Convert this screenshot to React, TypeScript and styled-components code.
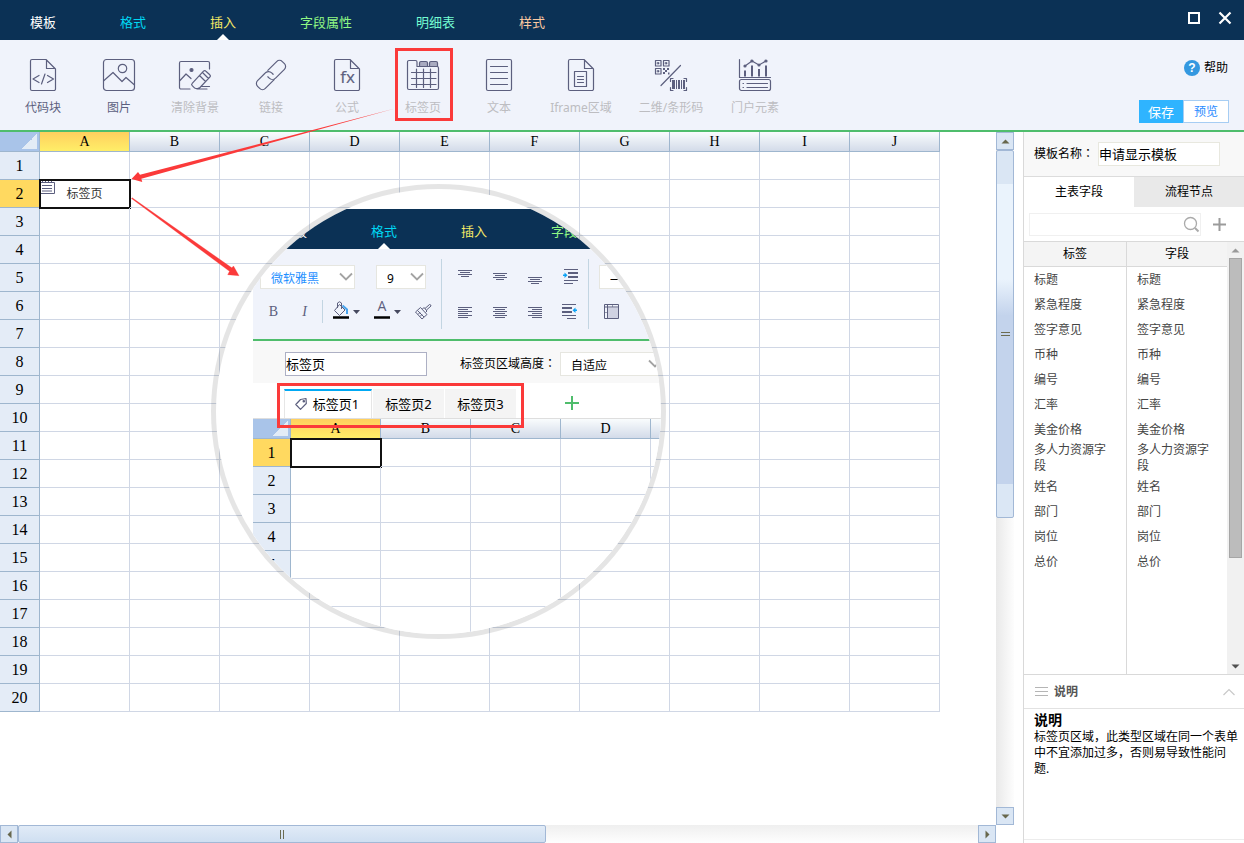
import React from "react";
import styled, { createGlobalStyle, css } from "styled-components";

const INK = "#5c5f7e";
const RED = "#fb3a3a";
const GREEN = "#4fbd6c";
const CJK = `"Noto Sans", "Noto Sans CJK SC", sans-serif`;

const GlobalStyle = createGlobalStyle`
  *, *::before, *::after { box-sizing: border-box; }
  body { margin: 0; background: #fff; font: 12px/16px ${CJK}; color: #000; overflow: hidden; }
  button, input, select { font: inherit; color: inherit; margin: 0; padding: 0; border: 0; border-radius: 0; background: none; outline: none; }
  svg { display: block; flex: none; overflow: visible; }
  h2, h3, p { margin: 0; }
`;

/* Full-width colon set in the middle of its square */
const Mark = styled.span`
  font-family: "Noto Sans CJK TC", sans-serif;
  line-height: 1;
`;

/* ---------- page frame ---------- */

const Page = styled.div`
  position: relative;
  display: flex;
  flex-direction: column;
  height: 100vh;
  overflow: hidden;
`;

const TitleBar = styled.header<{ $inset: number }>`
  display: flex;
  justify-content: space-between;
  height: 40px;
  padding-left: ${(p) => p.$inset}px;
  background: #0b3155;
`;

const Menu = styled.nav`
  display: flex;
  gap: 64px;
`;

const MenuLink = styled.a<{ $color: string; $active: boolean }>`
  position: relative;
  flex: none;
  padding-top: 4px;
  font-size: 13px;
  line-height: 36px;
  color: ${(p) => p.$color};
  text-decoration: none;
  white-space: nowrap;
  ${(p) =>
    p.$active &&
    css`
      &::after {
        content: "";
        position: absolute;
        left: 50%;
        bottom: 0;
        margin-left: -6px;
        border: 6px solid transparent;
        border-top: 0;
        border-bottom-color: #fff;
      }
    `}
`;

const WindowButtons = styled.div`
  display: flex;
  gap: 15px;
  padding: 10px 11px;
`;

const WindowButton = styled.button`
  width: 16px;
  height: 16px;
`;

const menuItems = [
  { label: "模板", color: "#ffffff" },
  { label: "格式", color: "#00d8f4" },
  { label: "插入", color: "#f6ea66" },
  { label: "字段属性", color: "#90f784" },
  { label: "明细表", color: "#74fbd2" },
  { label: "样式", color: "#fbc9a2" },
];

function MenuBar({ items, active }: { items: typeof menuItems; active: string }) {
  return (
    <Menu>
      {items.map((m) => (
        <MenuLink key={m.label} href="#" $color={m.color} $active={m.label === active}>
          {m.label}
        </MenuLink>
      ))}
    </Menu>
  );
}

/* ---------- ribbon ---------- */

const Ribbon = styled.section`
  display: flex;
  justify-content: space-between;
  height: 92px;
  flex: none;
  border-bottom: 2px solid ${GREEN};
  background: #f0f3fb;
`;

const Tools = styled.div`
  display: flex;
  padding: 8px 0 9px 5px;
`;

const Tool = styled.button<{ $width: number; $muted: boolean }>`
  position: relative;
  display: flex;
  flex-direction: column;
  align-items: center;
  gap: 8px;
  width: ${(p) => p.$width}px;
  padding-top: 10px;
  line-height: 16px;
  white-space: nowrap;
  color: ${(p) => (p.$muted ? "#bdbdc1" : INK)};
`;

const ToolFrame = styled.span`
  position: absolute;
  inset: 0 9px 0 10px;
  width: 58px;
  border: 3px solid ${RED};
`;

const PAGE_PATH =
  "M6 1.5H20L29.5 11V31a1.5 1.5 0 0 1-1.5 1.5H6A1.5 1.5 0 0 1 4.5 31V3A1.5 1.5 0 0 1 6 1.5ZM20.5 2V10.5H29";

function Glyph({ children }: { children: React.ReactNode }) {
  return (
    <svg width="34" height="34" viewBox="0 0 34 34" fill="none" stroke={INK} strokeWidth="1.2" strokeLinecap="round" strokeLinejoin="round">
      {children}
    </svg>
  );
}

const tools: { label: string; width: number; muted: boolean; framed?: boolean; art: React.ReactNode }[] = [
  {
    label: "代码块",
    width: 76,
    muted: false,
    art: (
      <>
        <path d={PAGE_PATH} />
        <path d="M13 17.5 7 21l6 3.5M19 16l-3.5 10M21.5 17.5l6 3.5-6 3.5" />
      </>
    ),
  },
  {
    label: "图片",
    width: 76,
    muted: false,
    art: (
      <>
        <rect x="1.5" y="1.5" width="31" height="31" rx="3" />
        <circle cx="20.5" cy="10.5" r="4.2" />
        <path d="M2 22.5 11 14.5l9 9 4-4 8.5 7.5" />
      </>
    ),
  },
  {
    label: "清除背景",
    width: 76,
    muted: true,
    art: (
      <>
        <path d="M31.5 11V5a1.5 1.5 0 0 0-1.5-1.5H3A1.5 1.5 0 0 0 1.5 5v24.5a1.5 1.5 0 0 0 1.5 1.5h9M2 22.5 8 16l5 4.5" />
        <circle cx="13.5" cy="12" r="1.5" fill={INK} />
        <path d="M25.5 13.2q1.2-1.2 2.4 0l3.9 3.6q1.2 1.2 0 2.4L22 29.5q-1 1-2.5 1h-1.5q-1 0-1.8-.8l-2-2q-1.2-1.2 0-2.4ZM21.5 17.5l6 6M24.5 14.5l6 6M24 28.5h7.5M19 31h10" />
      </>
    ),
  },
  {
    label: "链接",
    width: 76,
    muted: true,
    art: (
      <g transform="translate(17 17) rotate(-45)">
        <path d="M1-5.5H13.5a4 4 0 0 1 4 4V1.5a4 4 0 0 1-4 4H1a4.5 4.5 0 0 1-4.5-4.5V-1" />
        <path d="M-1 5.5H-13.5a4 4 0 0 1-4-4V-1.5a4 4 0 0 1 4-4H-3a4.5 4.5 0 0 1 5 4.5V1" />
      </g>
    ),
  },
  {
    label: "公式",
    width: 76,
    muted: true,
    art: (
      <>
        <path d={PAGE_PATH} />
        <text x="17.5" y="25" textAnchor="middle" fontSize="17" fontFamily="Open Sans, sans-serif" fill={INK} strokeWidth="0.2">
          fx
        </text>
      </>
    ),
  },
  {
    label: "标签页",
    width: 76,
    muted: true,
    framed: true,
    art: (
      <>
        <path d="M3 2.5H9.5A1.5 1.5 0 0 1 11 4V8.5H31a1.5 1.5 0 0 1 1.5 1.5V30a1.5 1.5 0 0 1-1.5 1.5H3A1.5 1.5 0 0 1 1.5 30V4A1.5 1.5 0 0 1 3 2.5Z" />
        <path d="M13.5 8.5V5A1.5 1.5 0 0 1 15 3.5h5A1.5 1.5 0 0 1 21.5 5v3.5ZM23.5 8.5V5A1.5 1.5 0 0 1 25 3.5h5A1.5 1.5 0 0 1 31.5 5v3.5Z" fill="#a9abc0" />
        <path d="M5.5 14.5H30M5.5 20.5H30M5.5 26.5H30M10.5 11V29.5M17.5 11V29.5M24.5 11V29.5" />
      </>
    ),
  },
  {
    label: "文本",
    width: 76,
    muted: true,
    art: (
      <>
        <rect x="4.5" y="1.5" width="25" height="31" rx="1.5" />
        <path d="M8.5 8.5h17M8.5 14.5h17M8.5 20.5h17M8.5 26.5h17" />
      </>
    ),
  },
  {
    label: "Iframe区域",
    width: 88,
    muted: true,
    art: (
      <>
        <path d={PAGE_PATH} />
        <path d="M10.5 13.5h12v15h-12ZM13.5 18.5h6M13.5 21.5h6M13.5 24.5h6" />
      </>
    ),
  },
  {
    label: "二维/条形码",
    width: 92,
    muted: true,
    art: (
      <>
        <path d="M1.5 2.5h5.5v5.5h-5.5ZM9.5 2.5h5.5v5.5h-5.5ZM1.5 10.5h5.5v5.5h-5.5ZM26.5 7.5 7 27.5" />
        <path d="M3.5 4.5h1.5v1.5h-1.5ZM11.5 4.5h1.5v1.5h-1.5ZM3.5 12.5h1.5v1.5h-1.5Z" fill={INK} strokeWidth="0.6" />
        <path d="M9 10h2v2h-2ZM13 10h2v2h-2ZM11 12h2v2h-2ZM9 14h2v2h-2ZM14 14.5h1.5v2h-1.5Z" fill={INK} stroke="none" />
        <path d="M19 20.5h-2.5v3M30 20.5h2.5v3M19 32.5h-2.5v-3M30 32.5h2.5v-3" />
        <path d="M18 22h3v9h-3ZM22 22h1v9h-1ZM24 22h2v9h-2ZM27 22h1v9h-1ZM29 22h2v9h-2Z" fill={INK} stroke="none" />
      </>
    ),
  },
  {
    label: "门户元素",
    width: 76,
    muted: true,
    art: (
      <>
        <path d="M1.5 1.5V19.5H32.5M7 8l7-5 7 4 7-4" />
        <path d="M7 12.5V18.5M14 7.5V18.5M21 11V18.5M28 7.5V18.5" strokeWidth="2" strokeLinecap="butt" />
        <circle cx="7" cy="8" r="1" fill={INK} />
        <circle cx="14" cy="3" r="1" fill={INK} />
        <circle cx="21" cy="7" r="1" fill={INK} />
        <circle cx="28" cy="3" r="1" fill={INK} />
        <rect x="1.5" y="21.5" width="31" height="11" rx="2" />
        <path d="M5 25.5h.5M5 29.5h.5M9 25.5h20.5M9 29.5h20.5" />
      </>
    ),
  },
];

const RibbonSide = styled.div`
  display: flex;
  flex-direction: column;
  align-items: flex-end;
  gap: 24px;
  padding: 20px 15px 0 0;
`;

const HelpLink = styled.a`
  display: flex;
  align-items: center;
  gap: 4px;
  margin-right: 1px;
  color: #000;
  text-decoration: none;
`;

const HelpMark = styled.span`
  width: 16px;
  height: 16px;
  border-radius: 8px;
  background: #3498e0;
  color: #fff;
  font: bold 12px/16px "Liberation Sans", sans-serif;
  text-align: center;
`;

const Actions = styled.div`
  display: flex;
`;

const ActionButton = styled.button<{ $primary?: boolean }>`
  height: 23px;
  ${(p) =>
    p.$primary
      ? css`
          width: 44px;
          background: #2fb4ff;
          color: #fff;
          font-size: 13px;
        `
      : css`
          width: 46px;
          border: 1px solid #a6cdf3;
          background: #fff;
          color: #2a8cff;
        `}
`;

/* ---------- spreadsheet ---------- */

const Workspace = styled.main`
  display: flex;
  flex: 1;
  min-height: 0;
`;

const Editor = styled.section`
  position: relative;
  display: flex;
  flex: 1;
  flex-direction: column;
  min-width: 0;
  padding-right: 9px;
`;

const EditorBody = styled.div`
  display: flex;
  flex: 1;
  min-height: 0;
`;

const EditorView = styled.div`
  flex: 1;
  min-width: 0;
  overflow: hidden;
`;

const Sheet = styled.table`
  table-layout: fixed;
  width: 0;
  border-spacing: 0;
  background: #fff;
`;

const RowHeadCol = styled.col<{ $width: number }>`
  width: ${(p) => p.$width}px;
`;

const DataCol = styled.col`
  width: 90px;
`;

const headEdge = css`
  padding: 0;
  border: solid #9eb6ce;
  border-width: 0 1px 1px 0;
  font-family: "Liberation Serif", serif;
  font-weight: normal;
`;

const Corner = styled.td`
  ${headEdge}
  height: 20px;
  background: linear-gradient(135deg, transparent 50%, #e3ecf6 50%) right 2px bottom 2px / 15px 15px no-repeat #a9c4e9;
`;

const ColHead = styled.th<{ $on: boolean }>`
  ${headEdge}
  height: 20px;
  font-size: 14px;
  line-height: 19px;
  background: ${(p) => (p.$on ? "linear-gradient(#ffcf5e, #ffee68)" : "linear-gradient(#f9fcfd, #d3dbe9)")};
`;

const RowHead = styled.th<{ $on: boolean }>`
  ${headEdge}
  height: 28px;
  font-size: 16px;
  line-height: 27px;
  background: ${(p) => (p.$on ? "#ffd960" : "#e4ecf7")};
`;

const Cell = styled.td<{ $on: boolean }>`
  position: relative;
  padding: 0;
  border: solid #d0d7e5;
  border-width: 0 1px 1px 0;
  text-align: center;
  color: #333;
  ${(p) =>
    p.$on &&
    css`
      &::after {
        content: "";
        position: absolute;
        inset: -1px -2px -2px -1px;
        border: 2px solid #111;
      }
    `}
`;

const CellMark = styled.svg`
  position: absolute;
  left: 0;
  top: 0;
`;

function Grid({ rows, cols, headWidth, selectedRow, children }: { rows: number; cols: string; headWidth: number; selectedRow: number; children?: React.ReactNode }) {
  const letters = cols.split("");
  return (
    <Sheet>
      <colgroup>
        <RowHeadCol $width={headWidth} />
        {letters.map((c) => (
          <DataCol key={c} />
        ))}
      </colgroup>
      <thead>
        <tr>
          <Corner />
          {letters.map((c) => (
            <ColHead key={c} scope="col" $on={c === "A"}>
              {c}
            </ColHead>
          ))}
        </tr>
      </thead>
      <tbody>
        {Array.from({ length: rows }, (_, i) => i + 1).map((r) => (
          <tr key={r}>
            <RowHead scope="row" $on={r === selectedRow}>
              {r}
            </RowHead>
            {letters.map((c) => {
              const on = r === selectedRow && c === "A";
              return (
                <Cell key={c} $on={on}>
                  {on ? children : null}
                </Cell>
              );
            })}
          </tr>
        ))}
      </tbody>
    </Sheet>
  );
}

/* ---------- scrollbars ---------- */

const Track = styled.div<{ $vertical?: boolean }>`
  display: flex;
  flex: none;
  ${(p) =>
    p.$vertical
      ? css`
          flex-direction: column;
          width: 18px;
          background: linear-gradient(90deg, #e9e9e9, #fdfdfd);
        `
      : css`
          height: 18px;
          margin-right: 18px;
          background: linear-gradient(#efefef, #fefefe);
        `}
`;

const Lane = styled.div<{ $vertical?: boolean }>`
  display: flex;
  flex: 1;
  flex-direction: ${(p) => (p.$vertical ? "column" : "row")};
`;

const Thumb = styled.div<{ $vertical?: boolean }>`
  display: flex;
  align-items: center;
  justify-content: center;
  flex: none;
  border: 1px solid #a2b8d6;
  border-radius: 2px;
  ${(p) =>
    p.$vertical
      ? css`
          height: 56%;
          background: linear-gradient(#dae6f4 0 9%, #eaf3fc 9% 35%, #c3d3ec 45% 91%, #dbe7f5 91%);
        `
      : css`
          width: 55%;
          background: linear-gradient(#e1ebf7, #cfdff1);
        `}
`;

const Grip = styled.span<{ $vertical?: boolean }>`
  width: ${(p) => (p.$vertical ? 9 : 4)}px;
  height: ${(p) => (p.$vertical ? 4 : 9)}px;
  border: solid #6b6b50;
  border-width: ${(p) => (p.$vertical ? "1px 0" : "0 1px")};
`;

const ArrowButton = styled.button`
  display: flex;
  align-items: center;
  justify-content: center;
  flex: none;
  width: 18px;
  height: 18px;
  border: 1px solid #a2b8d6;
  background: #dae6f4;
`;

const arrowPaths = {
  up: "M.5 6.5 4.5 2.5 8.5 6.5Z",
  down: "M.5 2.5 4.5 6.5 8.5 2.5Z",
  left: "M6.5 .5 2.5 4.5 6.5 8.5Z",
  right: "M2.5 .5 6.5 4.5 2.5 8.5Z",
};

function Arrow({ dir, color = "#67674c" }: { dir: keyof typeof arrowPaths; color?: string }) {
  return (
    <svg width="9" height="9" viewBox="0 0 9 9">
      <path d={arrowPaths[dir]} fill={color} />
    </svg>
  );
}

/* ---------- magnified preview of the tab page ---------- */

const Lens = styled.div`
  position: absolute;
  left: 211px;
  top: 52px;
  width: 455px;
  height: 455px;
  padding: 20px 0 0 37px;
  border: 5px solid rgba(0, 0, 0, 0.1);
  border-radius: 50%;
  background: #fff;
  background-clip: padding-box;
  overflow: hidden;
`;

const LensRibbon = styled.div`
  display: flex;
  height: 92px;
  padding-top: 10px;
  border-bottom: 2px solid ${GREEN};
  background: #f0f3fb;
`;

const LensGroup = styled.div<{ $width: number }>`
  flex: none;
  width: ${(p) => p.$width}px;
  height: 70px;
  border-right: 1px solid #c3d5e2;
`;

const LensRow = styled.div<{ $inset: number; $gap: number }>`
  display: flex;
  align-items: center;
  gap: ${(p) => p.$gap}px;
  height: 35px;
  padding-left: ${(p) => p.$inset}px;
`;

const SelectBox = styled.span<{ $width: number }>`
  position: relative;
  display: flex;
  align-items: center;
  flex: none;
  width: ${(p) => p.$width}px;
  height: 24px;
  border: 1px solid #e6e6e0;
  background: #fff;

  svg {
    position: absolute;
    right: 1px;
    pointer-events: none;
  }
`;

const Select = styled.select<{ $color: string }>`
  width: 100%;
  height: 22px;
  padding: 4px 0 0 10px;
  appearance: none;
  color: ${(p) => p.$color};
`;

function PickList({ id, label, value, width, color = "#000" }: { id: string; label: string; value: string; width: number; color?: string }) {
  return (
    <SelectBox $width={width}>
      <Select id={id} aria-label={label} $color={color} defaultValue={value}>
        <option>{value}</option>
      </Select>
      <svg width="14" height="10" viewBox="0 0 14 10" fill="none" stroke="#a3a3a3" strokeWidth="1.8">
        <path d="M1 1.5 7 7.5 13 1.5" />
      </svg>
    </SelectBox>
  );
}

const LetterButton = styled.button<{ $italic?: boolean }>`
  width: 31px;
  font: ${(p) => (p.$italic ? "italic " : "")}14px/17px "Liberation Serif", serif;
  color: ${INK};
  flex: none;
`;

const RowRule = styled.span`
  flex: none;
  width: 1px;
  height: 23px;
  margin: 0 10px 0 2px;
  background: #c3d5e2;
`;

const IconButton = styled.button<{ $width: number }>`
  display: flex;
  flex: none;
  width: ${(p) => p.$width}px;
`;

function Small({ width = 17, height = 17, children }: { width?: number; height?: number; children: React.ReactNode }) {
  return (
    <svg width={width} height={height} viewBox={`0 0 ${width} ${height}`} fill="none" stroke={INK} strokeWidth="1">
      {children}
    </svg>
  );
}

const lensIcons: { label: string; art: React.ReactNode }[][] = [
  [
    { label: "顶端对齐", art: <path d="M0 2.5h14M2 4.5h10M0 6.5h14M3 8.5h8" /> },
    { label: "垂直居中", art: <path d="M0 5.5h14M2 7.5h10M0 9.5h14M3 11.5h8" /> },
    { label: "底端对齐", art: <path d="M0 9.5h14M2 11.5h10M0 13.5h14M3 15.5h8" /> },
    {
      label: "增加缩进",
      art: (
        <>
          <path d="M1 1.5h14M1 12.5h14M1 15.5h9" />
          <path d="M5 5h10M5 9h10" strokeWidth="2" />
          <path d="M0 6.5v1.5h1.5v2l3-2.7-3-2.7v2Z" fill="#0aa2f5" stroke="none" />
        </>
      ),
    },
  ],
  [
    { label: "左对齐", art: <path d="M0 4.5h14M0 6.5h10M0 8.5h14M0 10.5h10M0 12.5h14M0 14.5h10" /> },
    { label: "居中", art: <path d="M0 4.5h14M2 6.5h10M0 8.5h14M2 10.5h10M0 12.5h14M2 14.5h10" /> },
    { label: "右对齐", art: <path d="M0 4.5h14M4 6.5h10M0 8.5h14M4 10.5h10M0 12.5h14M4 14.5h10" /> },
    {
      label: "减少缩进",
      art: (
        <>
          <path d="M-1 1.5h14M-1 12.5h14M4 15.5h9" />
          <path d="M-1 5h10M-1 9h10" strokeWidth="2" />
          <path d="M14 6.5v1.5h-1.5v2l-3-2.7 3-2.7v2Z" fill="#0aa2f5" stroke="none" />
        </>
      ),
    },
  ],
];

const SettingsBar = styled.div`
  display: flex;
  align-items: center;
  height: 42px;
  padding: 4px 0 0 32px;
  background: #f8f8f8;
`;

const TextField = styled.input<{ $edge: string }>`
  flex: none;
  height: 24px;
  padding-bottom: 2px;
  border: 1px solid ${(p) => p.$edge};
  background: #fff;
  font-size: 13px;
`;

const TabNameField = styled(TextField)`
  width: 142px;
  margin-right: 33px;
`;

const HeightLabel = styled.label`
  flex: none;
  width: 100px;
  white-space: nowrap;
`;

const TabStrip = styled.div`
  position: relative;
  display: flex;
  align-items: flex-end;
  gap: 1px;
  height: 36px;
  padding-left: 31px;
  border-bottom: 1px solid #dedede;
`;

const TabButton = styled.button<{ $on?: boolean }>`
  display: flex;
  align-items: center;
  justify-content: center;
  gap: 6px;
  flex: none;
  width: ${(p) => (p.$on ? 88 : 71)}px;
  height: 29px;
  font-size: 13px;
  background: ${(p) => (p.$on ? "#fff" : "#f4f4f4")};
  ${(p) =>
    p.$on &&
    css`
      padding: 0 2px 2px 0;
      border: solid #e6e6e6;
      border-width: 2px 1px 0;
      border-top-color: #00a9f4;
    `}
`;

const AddTab = styled.button`
  margin: 0 0 8px 48px;
`;

const TabFrame = styled.span`
  position: absolute;
  left: 24px;
  top: 0;
  z-index: 1;
  width: 247px;
  height: 45px;
  border: 3px solid ${RED};
`;

function Magnifier() {
  return (
    <Lens>
      <TitleBar as="div" $inset={28}>
        <MenuBar items={menuItems.slice(0, 4)} active="格式" />
      </TitleBar>
      <LensRibbon>
        <LensGroup $width={189}>
          <LensRow $inset={7} $gap={21}>
            <PickList id="font-family" label="字体" value="微软雅黑" width={95} color="#1e8fff" />
            <PickList id="font-size" label="字号" value="9" width={50} />
          </LensRow>
          <LensRow $inset={5} $gap={0}>
            <LetterButton aria-label="加粗">B</LetterButton>
            <LetterButton aria-label="斜体" $italic>
              I
            </LetterButton>
            <RowRule />
            <IconButton $width={41} aria-label="背景色">
              <Small width={28} height={21}>
                <path d="M6.5 3.5 12 9 6.5 14.5 1.5 9.5ZM4.5 7V2q2-2.5 4 0V8" />
                <path d="M9.5 4.5 14 8.5V13" stroke="#4aa5ee" strokeWidth="2" />
                <path d="M0 16.5h16" stroke="#000" strokeWidth="2.5" />
                <path d="M20 9h7l-3.5 4Z" fill="#46495f" stroke="none" />
              </Small>
            </IconButton>
            <IconButton $width={41} aria-label="字体颜色">
              <Small width={28} height={21}>
                <text x="8" y="10" textAnchor="middle" fontSize="14" fontFamily="Open Sans, sans-serif" fill={INK} stroke="none">
                  A
                </text>
                <path d="M0 16.5h16" stroke="#000" strokeWidth="2.5" />
                <path d="M20 9h7l-3.5 4Z" fill="#46495f" stroke="none" />
              </Small>
            </IconButton>
            <IconButton $width={17} aria-label="格式刷">
              <Small>
                <path d="M.5 9 7 16 12 11.5 5.5 4.5ZM2.5 7.5l6.5 6.5M3 11.5l2-2M5 13.5l2-2M7.5 6 9 4.5 12 8l-1.5 1.5" />
                <path d="M10 5.5 14.5 1.5q1.5 0 1.5 1.5L11.5 7" />
              </Small>
            </IconButton>
          </LensRow>
        </LensGroup>
        <LensGroup $width={147}>
          {lensIcons.map((row) => (
            <LensRow key={row[0].label} $inset={16} $gap={19}>
              {row.map((icon) => (
                <IconButton key={icon.label} $width={16} aria-label={icon.label}>
                  <Small>{icon.art}</Small>
                </IconButton>
              ))}
            </LensRow>
          ))}
        </LensGroup>
        <LensGroup $width={90}>
          <LensRow $inset={10} $gap={0}>
            <PickList id="border-style" label="边框样式" value="—" width={70} />
          </LensRow>
          <LensRow $inset={15} $gap={0}>
            <IconButton $width={17} aria-label="边框">
              <Small>
                <path d="M4 5h10v10H4Z" fill="#d0d2e2" stroke="none" />
                <path d="M.5 1.5h14v14H.5ZM.5 4H14.5M3.5 1.5v14" />
                <path d="M8.5 1.5v2.5M.5 9.5h3" strokeWidth="0.6" />
              </Small>
            </IconButton>
          </LensRow>
        </LensGroup>
      </LensRibbon>
      <SettingsBar>
        <TabNameField $edge="#adb0c4" aria-label="标签页名称" defaultValue="标签页" />
        <HeightLabel htmlFor="area-height">
          标签页区域高度<Mark>：</Mark>
        </HeightLabel>
        <PickList id="area-height" label="标签页区域高度" value="自适应" width={104} />
      </SettingsBar>
      <TabStrip>
        <TabButton $on>
          <svg width="12" height="13" viewBox="0 0 12 13" fill="none" stroke={INK} strokeWidth="1.2">
            <path d="M.8 7.5 5.5 2.5 11 1.5 11.3 6.5 5.5 12.3 Z" strokeLinejoin="round" />
            <circle cx="8.8" cy="4.2" r="0.7" />
          </svg>
          标签页1
        </TabButton>
        <TabButton>标签页2</TabButton>
        <TabButton>标签页3</TabButton>
        <AddTab aria-label="添加标签页">
          <svg width="14" height="14" viewBox="0 0 14 14" stroke={GREEN} strokeWidth="2">
            <path d="M7 0v14M0 7h14" />
          </svg>
        </AddTab>
        <TabFrame />
      </TabStrip>
      <Grid rows={7} cols="ABCD " headWidth={38} selectedRow={1} />
    </Lens>
  );
}

/* ---------- field panel ---------- */

const Panel = styled.aside`
  display: flex;
  flex-direction: column;
  flex: none;
  width: 221px;
  border-left: 1px solid #d9d9d9;
  background: #fff;
`;

const NameRow = styled.div`
  display: flex;
  align-items: center;
  gap: 4px;
  height: 45px;
  padding-left: 10px;
  border-bottom: 1px solid #dcdcdc;
  background: #f8f8f8;
`;

const NameField = styled(TextField)`
  width: 122px;
`;

const PanelTabs = styled.div`
  display: flex;
  height: 30px;
`;

const PanelTab = styled.button<{ $on?: boolean }>`
  flex: 1;
  background: ${(p) => (p.$on ? "#fff" : "#e9e9e9")};
`;

const SearchRow = styled.div`
  display: flex;
  align-items: center;
  gap: 12px;
  height: 34px;
  padding-left: 5px;
`;

const SearchBox = styled.label`
  display: flex;
  align-items: center;
  width: 172px;
  height: 23px;
  border: 1px solid #f0f0f0;
`;

const SearchInput = styled.input`
  flex: 1;
  min-width: 0;
`;

const FieldArea = styled.div`
  display: flex;
  flex: 1;
  min-height: 0;
  border: solid #d9d9d9;
  border-width: 1px 0;
`;

const FieldTable = styled.table`
  flex: 1;
  table-layout: fixed;
  border-spacing: 0;
`;

const FieldHead = styled.th`
  height: 25px;
  padding: 0;
  border-bottom: 1px solid #d9d9d9;
  background: #f4f4f4;
  font-weight: normal;

  & + & {
    width: 101px;
    border-left: 1px solid #d9d9d9;
  }
`;

const FieldCell = styled.td`
  height: 25px;
  padding: 0 15px 0 10px;
  color: #444;

  & + & {
    border-left: 1px solid #d9d9d9;
  }
`;

const FillCell = styled(FieldCell)`
  height: auto;
`;

const PanelScroll = styled.div`
  display: flex;
  flex-direction: column;
  flex: none;
  width: 17px;
  background: #f1f1f1;
`;

const PanelScrollButton = styled.button`
  display: flex;
  align-items: center;
  justify-content: center;
  height: 16px;
`;

const PanelLane = styled.div`
  flex: 1;
  padding: 0 2px;
`;

const PanelThumb = styled.div`
  height: 75%;
  border: 1px solid #a6a6a6;
  background: #bcbcbc;
`;

const NoteHead = styled.div`
  display: flex;
  align-items: center;
  gap: 6px;
  height: 34px;
  padding: 0 9px 0 11px;
  border-bottom: 1px solid #e2e2e2;
`;

const NoteTitle = styled.h2`
  flex: 1;
  font-size: 12px;
  font-weight: 600;
  color: #555;
`;

const Note = styled.div`
  height: 131px;
  padding: 2px 5px 0 10px;
  border-bottom: 1px solid #ececec;
  margin-bottom: 3px;

  h3 {
    font-size: 14px;
    line-height: 18px;
  }
`;

const fields = ["标题", "紧急程度", "签字意见", "币种", "编号", "汇率", "美金价格", "多人力资源字段", "姓名", "部门", "岗位", "总价"];

function FieldPanel() {
  return (
    <Panel>
      <NameRow>
        <label htmlFor="template-name">
          模板名称<Mark>：</Mark>
        </label>
        <NameField id="template-name" $edge="#e8e8df" defaultValue="申请显示模板" />
      </NameRow>
      <PanelTabs>
        <PanelTab $on>主表字段</PanelTab>
        <PanelTab>流程节点</PanelTab>
      </PanelTabs>
      <SearchRow>
        <SearchBox>
          <SearchInput aria-label="搜索字段" />
          <svg width="17" height="17" viewBox="0 0 17 17" fill="none" stroke="#aaa" strokeWidth="1.3">
            <circle cx="7.5" cy="7.5" r="6" />
            <path d="M12 12 15.5 15.5" strokeWidth="2" />
          </svg>
        </SearchBox>
        <button aria-label="添加字段">
          <svg width="13" height="13" viewBox="0 0 13 13" stroke="#9b9b9b" strokeWidth="2">
            <path d="M6.5 0v13M0 6.5h13" />
          </svg>
        </button>
      </SearchRow>
      <FieldArea>
        <FieldTable>
          <thead>
            <tr>
              <FieldHead scope="col">标签</FieldHead>
              <FieldHead scope="col">字段</FieldHead>
            </tr>
          </thead>
          <tbody>
            {fields.map((f) => (
              <tr key={f}>
                <FieldCell>{f}</FieldCell>
                <FieldCell>{f}</FieldCell>
              </tr>
            ))}
            <tr>
              <FillCell />
              <FillCell />
            </tr>
          </tbody>
        </FieldTable>
        <PanelScroll>
          <PanelScrollButton aria-label="向上滚动">
            <Arrow dir="up" color="#9a9a9a" />
          </PanelScrollButton>
          <PanelLane>
            <PanelThumb />
          </PanelLane>
          <PanelScrollButton aria-label="向下滚动">
            <Arrow dir="down" color="#505050" />
          </PanelScrollButton>
        </PanelScroll>
      </FieldArea>
      <NoteHead>
        <svg width="13" height="11" viewBox="0 0 13 11" stroke="#b5b5b5">
          <path d="M0 1.5h13M0 5.5h13M0 9.5h13" />
        </svg>
        <NoteTitle>说明</NoteTitle>
        <svg width="12" height="8" viewBox="0 0 12 8" fill="none" stroke="#c9c9c9" strokeWidth="1.2">
          <path d="M.5 7 6 1.5 11.5 7" />
        </svg>
      </NoteHead>
      <Note>
        <h3>说明</h3>
        <p>标签页区域，此类型区域在同一个表单中不宜添加过多，否则易导致性能问题.</p>
      </Note>
    </Panel>
  );
}

/* ---------- guide arrows ---------- */

const GuideArrows = styled.svg`
  position: absolute;
  left: 0;
  top: 0;
  pointer-events: none;
`;

export default function App() {
  return (
    <Page>
      <GlobalStyle />
      <TitleBar $inset={30}>
        <MenuBar items={menuItems} active="插入" />
        <WindowButtons>
          <WindowButton aria-label="最大化">
            <svg width="16" height="16" viewBox="0 0 16 16" fill="none" stroke="#fff" strokeWidth="2">
              <path d="M3 3h10v10H3Z" />
            </svg>
          </WindowButton>
          <WindowButton aria-label="关闭">
            <svg width="16" height="16" viewBox="0 0 16 16" fill="none" stroke="#fff" strokeWidth="2.2">
              <path d="M2.5 2.5l11 11M13.5 2.5l-11 11" />
            </svg>
          </WindowButton>
        </WindowButtons>
      </TitleBar>
      <Ribbon>
        <Tools>
          {tools.map((t) => (
            <Tool key={t.label} $width={t.width} $muted={t.muted}>
              <Glyph>{t.art}</Glyph>
              {t.label}
              {t.framed && <ToolFrame />}
            </Tool>
          ))}
        </Tools>
        <RibbonSide>
          <HelpLink href="#">
            <HelpMark>?</HelpMark>
            帮助
          </HelpLink>
          <Actions>
            <ActionButton $primary>保存</ActionButton>
            <ActionButton>预览</ActionButton>
          </Actions>
        </RibbonSide>
      </Ribbon>
      <Workspace>
        <Editor>
          <EditorBody>
            <EditorView>
              <Grid rows={20} cols="ABCDEFGHIJ" headWidth={40} selectedRow={2}>
                <CellMark width="15" height="15" viewBox="0 0 15 15" fill="none" stroke={INK}>
                  <path d="M0 2.5h14.5v11H0M2.5 0v2M5.5 0v2M8.5 0v2M11.5 0v2M2 5.5h10M2 8.5h10M2 11h10" />
                </CellMark>
                标签页
              </Grid>
            </EditorView>
            <Track $vertical>
              <ArrowButton aria-label="向上滚动">
                <Arrow dir="up" />
              </ArrowButton>
              <Lane $vertical>
                <Thumb $vertical>
                  <Grip $vertical />
                </Thumb>
              </Lane>
              <ArrowButton aria-label="向下滚动">
                <Arrow dir="down" />
              </ArrowButton>
            </Track>
          </EditorBody>
          <Track>
            <ArrowButton aria-label="向左滚动">
              <Arrow dir="left" />
            </ArrowButton>
            <Lane>
              <Thumb>
                <Grip />
              </Thumb>
            </Lane>
            <ArrowButton aria-label="向右滚动">
              <Arrow dir="right" />
            </ArrowButton>
          </Track>
          <Magnifier />
        </Editor>
        <FieldPanel />
      </Workspace>
      <GuideArrows width="460" height="300" viewBox="0 0 460 300" fill={RED}>
        <path d="M395 108.5 140 174.8 138 172 131.5 179 142.3 182 141.3 178.8Z" />
        <path d="M131.5 198.5 132.2 197.8 231.8 267.8 233.5 266 239 275.7 227.7 274.7 229.5 271.3Z" stroke={RED} strokeWidth="0.3" />
      </GuideArrows>
    </Page>
  );
}
